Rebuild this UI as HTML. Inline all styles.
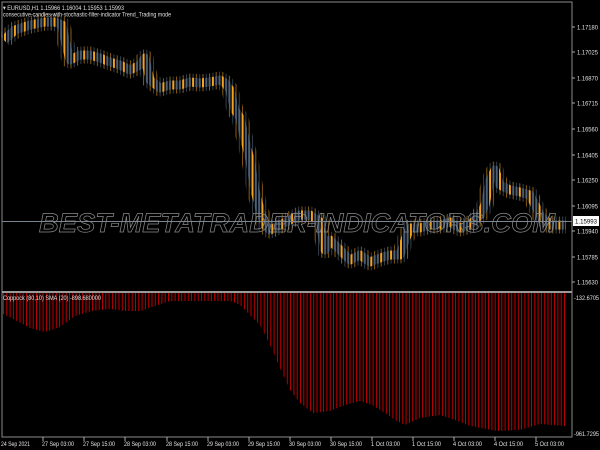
<!DOCTYPE html>
<html><head><meta charset="utf-8"><style>
html,body{margin:0;padding:0;background:#000;width:600px;height:450px;overflow:hidden}
svg{display:block}
text{font-family:"Liberation Sans",sans-serif}
</style></head><body>
<svg width="600" height="450" xmlns="http://www.w3.org/2000/svg">
<defs>
<pattern id="pb" patternUnits="userSpaceOnUse" x="4" y="0" width="9.9" height="10"><rect x="0" y="0" width="2" height="10" fill="#f5a21e"/><rect x="3.3" y="0" width="2" height="10" fill="#4d6076"/><rect x="6.6" y="0" width="2" height="10" fill="#4d6076"/></pattern>
<pattern id="pw" patternUnits="userSpaceOnUse" x="4" y="0" width="6.6" height="10"><rect x="0.5" y="0" width="1" height="10" fill="#8a5e14"/><rect x="3.8" y="0" width="1" height="10" fill="#34414f"/></pattern>
<pattern id="pr" patternUnits="userSpaceOnUse" x="3" y="0" width="3.3" height="10"><rect x="0" y="0" width="1" height="10" fill="#c00000"/></pattern>
</defs>
<rect width="600" height="450" fill="#000"/>
<polyline fill="none" stroke="url(#pw)" stroke-width="17" stroke-linejoin="round" points="4,40 15,30 30,25 45,22 55,22 62,25 65,40 70,60 80,55 90,55 100,58 110,62 120,65 130,70 140,65 145,58 150,80 160,88 170,85 180,85 190,82 200,83 210,82 220,80 225,83 230,90 235,110 240,118 245,140 250,160 255,190 260,210 265,225 270,230 280,225 290,220 300,215 310,215 320,222 325,250 330,240 340,250 350,260 360,255 370,262 380,258 390,255 400,255 405,240 410,228 420,228 430,225 440,225 450,222 460,228 470,225 480,215 485,205 490,180 495,170 500,185 510,190 520,192 530,195 540,215 550,225 560,225 566,225"/>
<polyline fill="none" stroke="url(#pb)" stroke-width="9" stroke-linejoin="round" points="4,40 15,30 30,25 45,22 55,22 62,25 65,40 70,60 80,55 90,55 100,58 110,62 120,65 130,70 140,65 145,58 150,80 160,88 170,85 180,85 190,82 200,83 210,82 220,80 225,83 230,90 235,110 240,118 245,140 250,160 255,190 260,210 265,225 270,230 280,225 290,220 300,215 310,215 320,222 325,250 330,240 340,250 350,260 360,255 370,262 380,258 390,255 400,255 405,240 410,228 420,228 430,225 440,225 450,222 460,228 470,225 480,215 485,205 490,180 495,170 500,185 510,190 520,192 530,195 540,215 550,225 560,225 566,225"/>
<polygon fill="url(#pr)" points="3,293 566,293 565,426 540,424 520,430 497,431 470,426 455,420 440,415 420,418 405,425 395,420 385,413 372,405 360,401 345,405 330,411 313,413 300,403 290,390 280,368 270,345 260,325 250,315 240,305 230,301 170,301 155,306 140,311 125,311 110,309 92,311 75,316 60,327 45,332 30,328 15,320 3,314"/>
<line x1="2" y1="221.5" x2="572" y2="221.5" stroke="#7a8590" stroke-width="1"/>
<text x="297" y="232" font-size="27" font-style="italic" font-weight="bold" fill="none" stroke="#8a8a8a" stroke-width="0.7" text-anchor="middle" textLength="516" lengthAdjust="spacingAndGlyphs">BEST-METATRADER-INDICATORS.COM</text>
<rect x="2" y="2" width="570" height="435" fill="none" stroke="#8a8a8a" stroke-width="1"/>
<line x1="2" y1="292" x2="572" y2="292" stroke="#9a9a9a" stroke-width="2"/>
<g font-size="6.5" fill="#e0e0e0">
<text x="3" y="10" textLength="121" lengthAdjust="spacingAndGlyphs">▾ EURUSD,H1  1.15966 1.16004 1.15953 1.15993</text>
<text x="3" y="16.5" textLength="168" lengthAdjust="spacingAndGlyphs">consecutive-candles-with-stochastic-filter-indicator Trend_Trading mode</text>
<text x="3" y="300" textLength="98" lengthAdjust="spacingAndGlyphs">Coppock (80,10) SMA (20) -898.680000</text>
</g>
<g font-size="6.5" fill="#e0e0e0" stroke="none">
<path d="M572 27h3M572 52h3M572 78h3M572 103h3M572 129h3M572 155h3M572 180h3M572 206h3M572 231h3M572 257h3M572 282h3M43 437v4M84 437v4M125 437v4M167 437v4M208 437v4M249 437v4M290 437v4M331 437v4M372 437v4M413 437v4M454 437v4M495 437v4M536 437v4" stroke="#aaa"/>
<text x="577" y="29.5" textLength="21" lengthAdjust="spacingAndGlyphs">1.17180</text>
<text x="577" y="54.5" textLength="21" lengthAdjust="spacingAndGlyphs">1.17025</text>
<text x="577" y="80.5" textLength="21" lengthAdjust="spacingAndGlyphs">1.16870</text>
<text x="577" y="105.5" textLength="21" lengthAdjust="spacingAndGlyphs">1.16715</text>
<text x="577" y="131.5" textLength="21" lengthAdjust="spacingAndGlyphs">1.16560</text>
<text x="577" y="157.5" textLength="21" lengthAdjust="spacingAndGlyphs">1.16405</text>
<text x="577" y="182.5" textLength="21" lengthAdjust="spacingAndGlyphs">1.16250</text>
<text x="577" y="208.5" textLength="21" lengthAdjust="spacingAndGlyphs">1.16095</text>
<text x="577" y="233.5" textLength="21" lengthAdjust="spacingAndGlyphs">1.15940</text>
<text x="577" y="259.5" textLength="21" lengthAdjust="spacingAndGlyphs">1.15785</text>
<text x="577" y="284.5" textLength="21" lengthAdjust="spacingAndGlyphs">1.15630</text>
<text x="574" y="300" textLength="25" lengthAdjust="spacingAndGlyphs">-132.6705</text>
<text x="574" y="436" textLength="25" lengthAdjust="spacingAndGlyphs">-961.7295</text>
<text x="1" y="446" textLength="29" lengthAdjust="spacingAndGlyphs">24 Sep 2021</text>
<text x="42" y="446" textLength="32" lengthAdjust="spacingAndGlyphs">27 Sep 03:00</text>
<text x="83" y="446" textLength="32" lengthAdjust="spacingAndGlyphs">27 Sep 15:00</text>
<text x="124" y="446" textLength="32" lengthAdjust="spacingAndGlyphs">28 Sep 03:00</text>
<text x="166" y="446" textLength="32" lengthAdjust="spacingAndGlyphs">28 Sep 15:00</text>
<text x="207" y="446" textLength="32" lengthAdjust="spacingAndGlyphs">29 Sep 03:00</text>
<text x="248" y="446" textLength="32" lengthAdjust="spacingAndGlyphs">29 Sep 15:00</text>
<text x="289" y="446" textLength="32" lengthAdjust="spacingAndGlyphs">30 Sep 03:00</text>
<text x="330" y="446" textLength="32" lengthAdjust="spacingAndGlyphs">30 Sep 15:00</text>
<text x="371" y="446" textLength="29" lengthAdjust="spacingAndGlyphs">1 Oct 03:00</text>
<text x="412" y="446" textLength="29" lengthAdjust="spacingAndGlyphs">1 Oct 15:00</text>
<text x="453" y="446" textLength="29" lengthAdjust="spacingAndGlyphs">4 Oct 03:00</text>
<text x="494" y="446" textLength="29" lengthAdjust="spacingAndGlyphs">4 Oct 15:00</text>
<text x="535" y="446" textLength="29" lengthAdjust="spacingAndGlyphs">5 Oct 03:00</text>
</g>
<rect x="573" y="216" width="26" height="10" fill="#fff"/>
<text x="575" y="223.5" font-size="6.5" fill="#000" textLength="22" lengthAdjust="spacingAndGlyphs">1.15993</text>
</svg>
</body></html>
